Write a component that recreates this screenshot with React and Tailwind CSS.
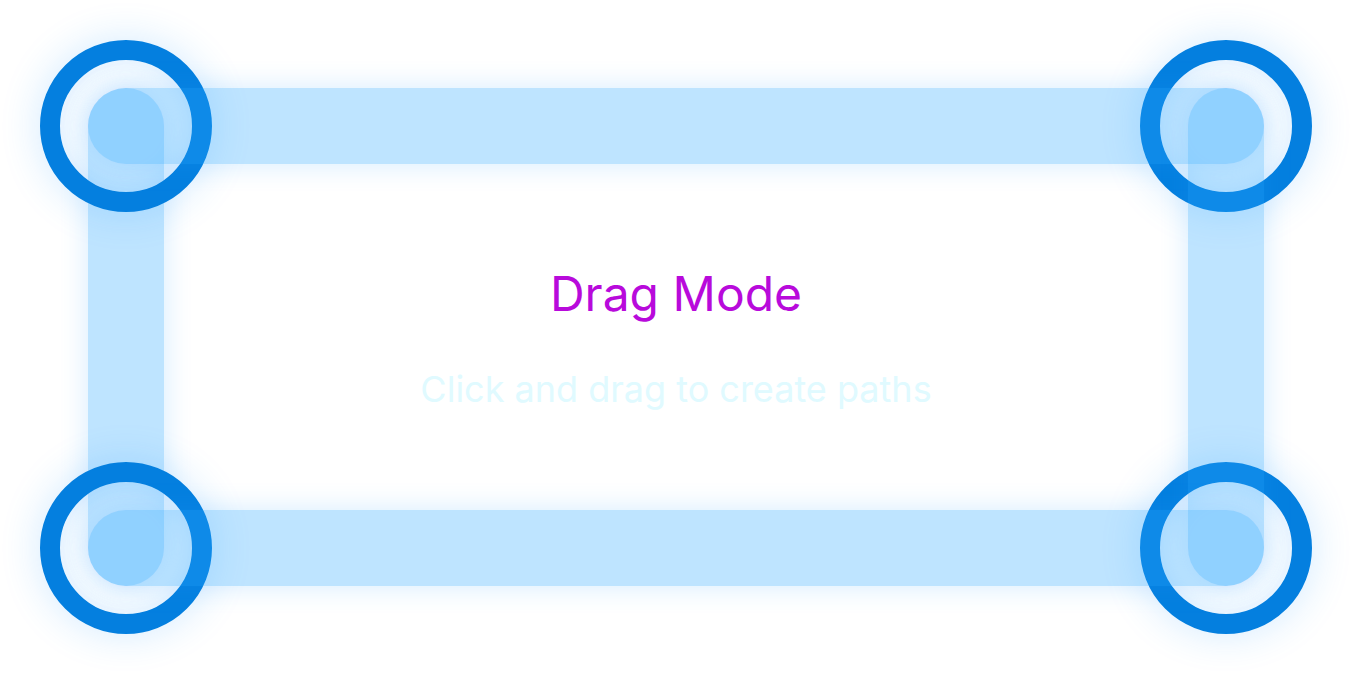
const BAR =
  "col-start-1 row-start-1 m-12 rounded-full bg-[#29a5ff]/30 shadow-[0_0_28px_rgba(41,155,255,0.2)]";
const NODE =
  "col-start-1 row-start-1 size-43 rounded-full border-20 border-[#047fdf] shadow-[0_0_40px_rgba(30,150,255,0.2),inset_0_0_28px_rgba(30,150,255,0.2)]";

export default function App() {
  return (
    <main className="grid min-h-screen bg-white p-10 font-['Inter',sans-serif]">
      <div className={`${BAR} w-19 justify-self-start`} />
      <div className={`${NODE} self-start justify-self-start`} />
      <div className={`${NODE} self-end justify-self-start`} />
      <div className={`${NODE} self-start justify-self-end`} />
      <div className={`${NODE} self-end justify-self-end`} />
      <div className={`${BAR} h-19 self-start`} />
      <div className={`${BAR} w-19 justify-self-end`} />
      <div className={`${BAR} h-19 self-end`} />
      <section className="col-start-1 row-start-1 flex flex-col items-center gap-8 self-center text-center">
        <h1 className="text-5xl leading-normal text-[#b80adb]">Drag Mode</h1>
        <p className="text-4xl leading-normal text-[#e0faff]">
          Click and drag to create paths
        </p>
      </section>
    </main>
  );
}
